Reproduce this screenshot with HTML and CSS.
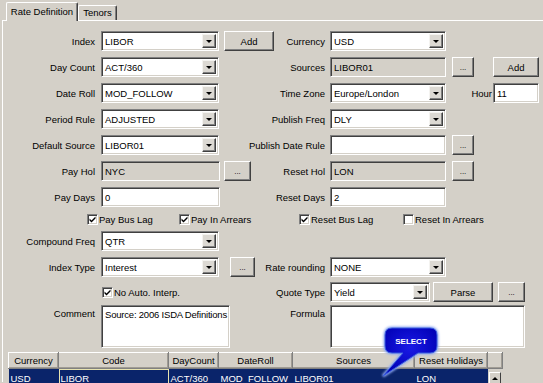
FILE: index.html
```html
<!DOCTYPE html>
<html lang="en">
  <head>
    <meta charset="UTF-8" />
    <title>Rate Definition</title>
    <link rel="stylesheet" href="styles.css">
  </head>
  <body>
    <div class="window">
      <div class="tabs">
        <div class="tab active">Rate Definition</div>
        <div class="tab tenors">Tenors</div>
      </div>

      <div class="panel">
        <!-- Index / Currency -->
        <div class="row">
          <div class="left">
            <label class="lbl">Index</label>
            <div class="combo"><span class="val">LIBOR</span><span class="arrow"></span></div>
            <button class="btn add-l">Add</button>
          </div>
          <label class="lbl-r">Currency</label>
          <div class="combo combo-r"><span class="val">USD</span><span class="arrow"></span></div>
        </div>

        <div class="row">
          <div class="left">
            <label class="lbl">Day Count</label>
            <div class="combo"><span class="val">ACT/360</span><span class="arrow"></span></div>
          </div>
          <label class="lbl-r">Sources</label>
          <input class="field field-r ro" type="text" value="LIBOR01" readonly />
          <button class="btn dots">...</button>
          <button class="btn add-r">Add</button>
        </div>

        <div class="row">
          <div class="left">
            <label class="lbl">Date Roll</label>
            <div class="combo"><span class="val">MOD_FOLLOW</span><span class="arrow"></span></div>
          </div>
          <label class="lbl-r">Time Zone</label>
          <div class="combo combo-r"><span class="val">Europe/London</span><span class="arrow"></span></div>
          <label class="hour-lbl">Hour</label>
          <input class="field hour" type="text" value="11" />
        </div>

        <div class="row">
          <div class="left">
            <label class="lbl">Period Rule</label>
            <div class="combo"><span class="val">ADJUSTED</span><span class="arrow"></span></div>
          </div>
          <label class="lbl-r">Publish Freq</label>
          <div class="combo combo-r"><span class="val">DLY</span><span class="arrow"></span></div>
        </div>

        <div class="row">
          <div class="left">
            <label class="lbl">Default Source</label>
            <div class="combo"><span class="val">LIBOR01</span><span class="arrow"></span></div>
          </div>
          <label class="lbl-r">Publish Date Rule</label>
          <input class="field field-r" type="text" value="" />
          <button class="btn dots">...</button>
        </div>

        <div class="row">
          <div class="left">
            <label class="lbl">Pay Hol</label>
            <input class="field ro" type="text" value="NYC" readonly />
            <button class="btn dots dots-l">...</button>
          </div>
          <label class="lbl-r">Reset Hol</label>
          <input class="field field-r ro" type="text" value="LON" readonly />
          <button class="btn dots">...</button>
        </div>

        <div class="row">
          <div class="left">
            <label class="lbl">Pay Days</label>
            <input class="field" type="text" value="0" />
          </div>
          <label class="lbl-r">Reset Days</label>
          <input class="field field-r" type="text" value="2" />
        </div>

        <div class="checks">
          <label class="chk"><span class="box on"></span>Pay Bus Lag</label>
          <label class="chk"><span class="box on"></span>Pay In Arrears</label>
          <label class="chk"><span class="box on"></span>Reset Bus Lag</label>
          <label class="chk"><span class="box"></span>Reset In Arrears</label>
        </div>

        <div class="row">
          <div class="left">
            <label class="lbl">Compound Freq</label>
            <div class="combo"><span class="val">QTR</span><span class="arrow"></span></div>
          </div>
        </div>

        <div class="row">
          <div class="left">
            <label class="lbl">Index Type</label>
            <div class="combo"><span class="val">Interest</span><span class="arrow"></span></div>
            <button class="btn dots dots-it">...</button>
          </div>
          <label class="lbl-r">Rate rounding</label>
          <div class="combo combo-r"><span class="val">NONE</span><span class="arrow"></span></div>
        </div>

        <div class="row row-short">
          <div class="left">
            <span class="lbl"></span>
            <label class="chk chk-interp"><span class="box on"></span>No Auto. Interp.</label>
          </div>
          <label class="lbl-r">Quote Type</label>
          <div class="combo combo-q"><span class="val">Yield</span><span class="arrow"></span></div>
          <button class="btn parse">Parse</button>
          <button class="btn dots dots-q">...</button>
        </div>

        <div class="row row-text">
          <div class="left">
            <label class="lbl">Comment</label>
            <textarea class="memo">Source: 2006 ISDA Definitions</textarea>
          </div>
          <label class="lbl-r">Formula</label>
          <textarea class="memo memo-r"></textarea>
        </div>

        <table class="grid">
          <thead>
            <tr>
              <th class="w-cur">Currency</th>
              <th class="w-code">Code</th>
              <th class="w-dc">DayCount</th>
              <th class="w-dr">DateRoll</th>
              <th class="w-src">Sources</th>
              <th class="w-hol">Reset Holidays</th>
              <th class="w-sb"></th>
            </tr>
          </thead>
          <tbody>
            <tr class="sel">
              <td>USD</td>
              <td class="focus">LIBOR</td>
              <td>ACT/360</td>
              <td>MOD_FOLLOW</td>
              <td>LIBOR01</td>
              <td>LON</td>
              <td class="sb"><span class="up"></span></td>
            </tr>
          </tbody>
        </table>
      </div>

      <!-- callout over the grid -->
      <svg class="bubble" width="66" height="58" viewBox="0 0 66 58">
        <defs>
          <radialGradient id="bfill" cx="50%" cy="40%" r="60%">
            <stop offset="0" stop-color="#1a1ae6" />
            <stop offset="1" stop-color="#0000b4" />
          </radialGradient>
          <filter id="glow" x="-20%" y="-20%" width="140%" height="140%">
            <feGaussianBlur stdDeviation="1.2" />
          </filter>
        </defs>
        <path d="M12 4 H50 Q57 4 57 11 V22 Q57 29 50 29 H38 L3 52 L23 29 H12 Q5 29 5 22 V11 Q5 4 12 4 Z"
              fill="none" stroke="#8fa8f0" stroke-width="3" filter="url(#glow)" />
        <path d="M12 4 H50 Q57 4 57 11 V22 Q57 29 50 29 H38 L3 52 L23 29 H12 Q5 29 5 22 V11 Q5 4 12 4 Z"
              fill="url(#bfill)" stroke="#3a5ee0" stroke-width="1" />
        <text x="31" y="20" text-anchor="middle" class="bubble-text">SELECT</text>
      </svg>
    </div>
  </body>
</html>
```

FILE: styles.css
```css
body {
  margin: 0;
  background-color: #d4d0c8;
  font-family: "Liberation Sans", Arial, sans-serif;
  font-size: 9.5px;
  color: #000000;
  overflow: hidden;
}
.window {
  position: relative;
  width: 543px;
  height: 383px;
  overflow: hidden;
}
.tabs {
  display: flex;
  align-items: flex-end;
  height: 20px;
  padding-left: 6px;
}
.tab {
  box-sizing: border-box;
  height: 15px;
  line-height: 13px;
  text-align: center;
  white-space: nowrap;
  border-left: 1px solid #ffffff;
  border-top: 1px solid #ffffff;
  border-right: 1px solid #404040;
  box-shadow: inset -1px 0 #808080;
  border-radius: 2px 2px 0 0;
}
.tab.active {
  position: relative;
  z-index: 1;
  width: 72px;
  height: 19px;
  line-height: 17px;
  margin-bottom: -1px;
  background-color: #d4d0c8;
}
.tenors {
  width: 39px;
}
.panel {
  margin-left: 2px;
  height: 362px;
  padding-top: 7px;
  box-sizing: border-box;
  border-top: 1px solid #ffffff;
  border-left: 1px solid #ffffff;
}

/* form rows */
.row {
  display: flex;
  align-items: center;
  height: 26px;
}
.row-short {
  height: 24px;
}
.row-text {
  align-items: flex-start;
  height: 44px;
  padding-top: 1px;
  box-sizing: border-box;
}
.left {
  display: flex;
  align-items: center;
  flex: none;
  width: 256px;
}
.row-text .left {
  align-items: flex-start;
}
.lbl {
  flex: none;
  width: 93px;
  margin-right: 5px;
  padding-right: 1px;
  box-sizing: border-box;
  text-align: right;
  white-space: nowrap;
}
.lbl-r {
  flex: none;
  display: flex;
  justify-content: flex-end;
  width: 66px;
  margin-right: 5px;
  white-space: nowrap;
}
.row-text .lbl,
.row-text .lbl-r {
  padding-top: 3px;
}

/* combo boxes */
.combo {
  display: flex;
  flex: none;
  width: 118px;
  height: 20px;
  padding: 2px;
  box-sizing: border-box;
  background-color: #ffffff;
  border: 1px solid;
  border-color: #808080 #ffffff #ffffff #808080;
  box-shadow: inset 1px 1px #404040, inset -1px -1px #d4d0c8;
}
.combo-r {
  width: 116px;
}
.combo-q {
  width: 100px;
}
.val {
  flex: 1;
  padding-left: 1px;
  line-height: 15px;
  white-space: nowrap;
  overflow: hidden;
}
.arrow {
  display: flex;
  align-items: center;
  justify-content: center;
  width: 14px;
  box-sizing: border-box;
  background-color: #dcd9d3;
  border: 1px solid;
  border-color: #f4f3f0 #404040 #404040 #f4f3f0;
  box-shadow: inset -1px -1px #808080;
}
.arrow::after {
  content: "";
  border-left: 3px solid transparent;
  border-right: 3px solid transparent;
  border-top: 3px solid #000000;
}

/* text fields */
.field,
.memo {
  flex: none;
  margin: 0;
  box-sizing: border-box;
  font: inherit;
  color: #000000;
  background-color: #ffffff;
  border: 1px solid;
  border-color: #808080 #ffffff #ffffff #808080;
  box-shadow: inset 1px 1px #404040, inset -1px -1px #d4d0c8;
  outline: none;
}
.field {
  width: 119px;
  height: 20px;
  padding: 0 2px 0 3px;
}
.field-r {
  width: 116px;
}
.ro {
  background-color: #d4d0c8;
}
.hour-lbl {
  width: 46px;
  text-align: right;
  margin-right: 1px;
}
.hour {
  width: 46px;
}
.memo {
  width: 129px;
  height: 43px;
  padding: 3px 2px 0 3px;
  resize: none;
  overflow: hidden;
  letter-spacing: -0.2px;
  white-space: pre;
}
.memo-r {
  width: 195px;
}

/* buttons */
.btn {
  flex: none;
  height: 20px;
  padding: 0;
  box-sizing: border-box;
  font: inherit;
  color: #000000;
  background-color: #d4d0c8;
  border: 1px solid;
  border-color: #ffffff #404040 #404040 #ffffff;
  box-shadow: inset -1px -1px #808080;
}
.add-l {
  width: 50px;
  margin-left: 5px;
}
.add-r {
  width: 46px;
  margin-left: 19px;
}
.dots {
  width: 22px;
  margin-left: 6px;
  font-size: 8px;
}
.dots-l {
  width: 27px;
  margin-left: 4px;
}
.dots-it {
  width: 25px;
  margin-left: 11px;
}
.parse {
  width: 60px;
  margin-left: 3px;
}
.dots-q {
  width: 27px;
  margin-left: 5px;
}

/* check boxes */
.checks {
  display: grid;
  grid-template-columns: 92px 120px 104px auto;
  align-items: center;
  height: 18px;
  padding-left: 84px;
}
.chk {
  display: flex;
  align-items: center;
  white-space: nowrap;
}
.box {
  width: 11px;
  height: 11px;
  margin-right: 1px;
  box-sizing: border-box;
  background-color: #ffffff;
  border: 1px solid;
  border-color: #808080 #ffffff #ffffff #808080;
  box-shadow: inset 1px 1px #404040, inset -1px -1px #d4d0c8;
}
.box.on {
  background: #ffffff url("data:image/svg+xml;utf8,<svg xmlns='http://www.w3.org/2000/svg' width='9' height='9'><path d='M1.5 3.5 L3.5 5.5 L7.5 1.5 V3.5 L3.5 7.5 L1.5 5.5 Z' fill='black'/></svg>") no-repeat center;
}
.chk-interp {
  margin-left: 1px;
}

/* lookup grid */
.grid {
  margin-top: 4px;
  margin-left: 5px;
  border-collapse: collapse;
  table-layout: fixed;
}
.grid th {
  height: 16px;
  padding: 0;
  box-sizing: border-box;
  font-weight: normal;
  text-align: center;
  background-color: #d4d0c8;
  border: 1px solid;
  border-color: #ffffff #808080 #808080 #ffffff;
  box-shadow: inset -1px -1px #a09c94;
}
.w-cur { width: 50px; }
.w-code { width: 110px; }
.w-dc { width: 50px; }
.w-dr { width: 74px; }
.w-src { width: 122px; }
.w-hol { width: 73px; }
.w-sb { width: 15px; }
.grid td {
  height: 15px;
  padding: 0 2px;
  white-space: nowrap;
  color: #ffffff;
  background-color: #0a246a;
}
.grid td.focus {
  outline: 1px solid #e8e4b0;
  outline-offset: -1px;
}
.grid td.sb {
  padding: 3px 2px 0 1px;
  vertical-align: top;
  background-color: #d4d0c8;
}
.up {
  display: flex;
  align-items: center;
  justify-content: center;
  width: 12px;
  height: 12px;
  box-sizing: border-box;
  background-color: #d4d0c8;
  border: 1px solid;
  border-color: #ffffff #404040 #404040 #ffffff;
}
.up::after {
  content: "";
  border-left: 3px solid transparent;
  border-right: 3px solid transparent;
  border-bottom: 3px solid #000000;
}

/* callout */
.bubble {
  position: absolute;
  left: 380px;
  top: 324px;
}
.bubble-text {
  font-family: "Liberation Sans", Arial, sans-serif;
  font-size: 8px;
  font-weight: bold;
  fill: #ffffff;
}
```
